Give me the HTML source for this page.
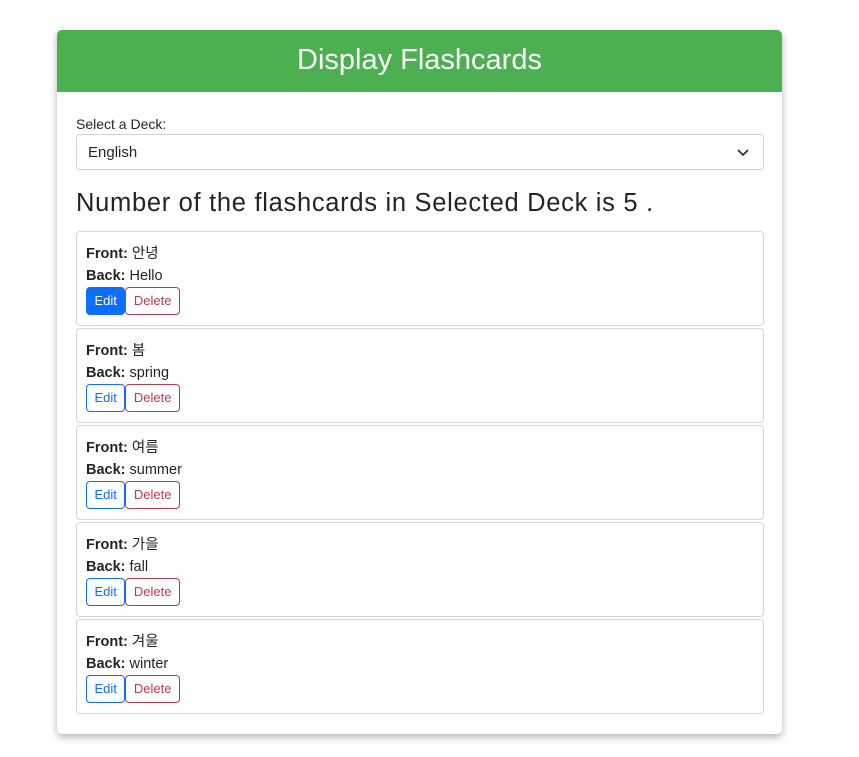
<!DOCTYPE html>
<html><head><style>
body{margin:0;background:#fff;font-family:"Liberation Sans","Noto Sans CJK KR",sans-serif;color:#212529;}
.wrap{position:absolute;left:57px;top:30px;width:725px;height:704px;border-radius:5px;box-shadow:0 3px 8px rgba(0,0,0,.3);background:#fff;overflow:hidden}
.hd{height:62px;background:#4CAF50;color:#fff;font-size:29px;text-align:center;line-height:60px}
.lbl{position:absolute;left:19px;top:86px;font-size:14px}
.sel{position:absolute;left:19px;top:104px;width:688px;height:36px;border:1px solid #ced4da;border-radius:4px;font-size:15px;line-height:36px;padding-left:11px;box-sizing:border-box}
.sel svg{position:absolute;right:14px;top:14px}
.h{position:absolute;left:19px;top:159px;font-size:25.5px;letter-spacing:.7px;white-space:nowrap}
.card{position:absolute;left:19px;width:688px;height:95px;border:1px solid #d5d5d5;border-radius:4px;box-sizing:border-box;padding:11px 9px;font-size:14.5px;line-height:22px}
.btn{display:inline-block;height:28px;line-height:26px;box-sizing:border-box;border-radius:4px;font-size:13px;padding:0 7.5px;vertical-align:top}
.e{border:1px solid #0d6efd;color:#0d6efd}
.e.a{background:#0d6efd;color:#fff}
.d{border:1px solid #c0394b;color:#c0394b}
</style></head><body>
<div class="wrap">
<div class="hd">Display Flashcards</div>
<div class="lbl">Select a Deck:</div>
<div class="sel">English<svg width="12" height="8" viewBox="0 0 12 8"><path d="M1 1l5 5 5-5" fill="none" stroke="#333" stroke-width="1.8"/></svg></div>
<div class="h">Number of the flashcards in Selected Deck is 5 .</div>
<div class="card" style="top:201px"><b>Front:</b> 안녕<br><b>Back:</b> Hello<br><span class="btn e a">Edit</span><span class="btn d">Delete</span></div>
<div class="card" style="top:298px"><b>Front:</b> 봄<br><b>Back:</b> spring<br><span class="btn e">Edit</span><span class="btn d">Delete</span></div>
<div class="card" style="top:395px"><b>Front:</b> 여름<br><b>Back:</b> summer<br><span class="btn e">Edit</span><span class="btn d">Delete</span></div>
<div class="card" style="top:492px"><b>Front:</b> 가을<br><b>Back:</b> fall<br><span class="btn e">Edit</span><span class="btn d">Delete</span></div>
<div class="card" style="top:589px"><b>Front:</b> 겨울<br><b>Back:</b> winter<br><span class="btn e">Edit</span><span class="btn d">Delete</span></div>
</div>
</body></html>
